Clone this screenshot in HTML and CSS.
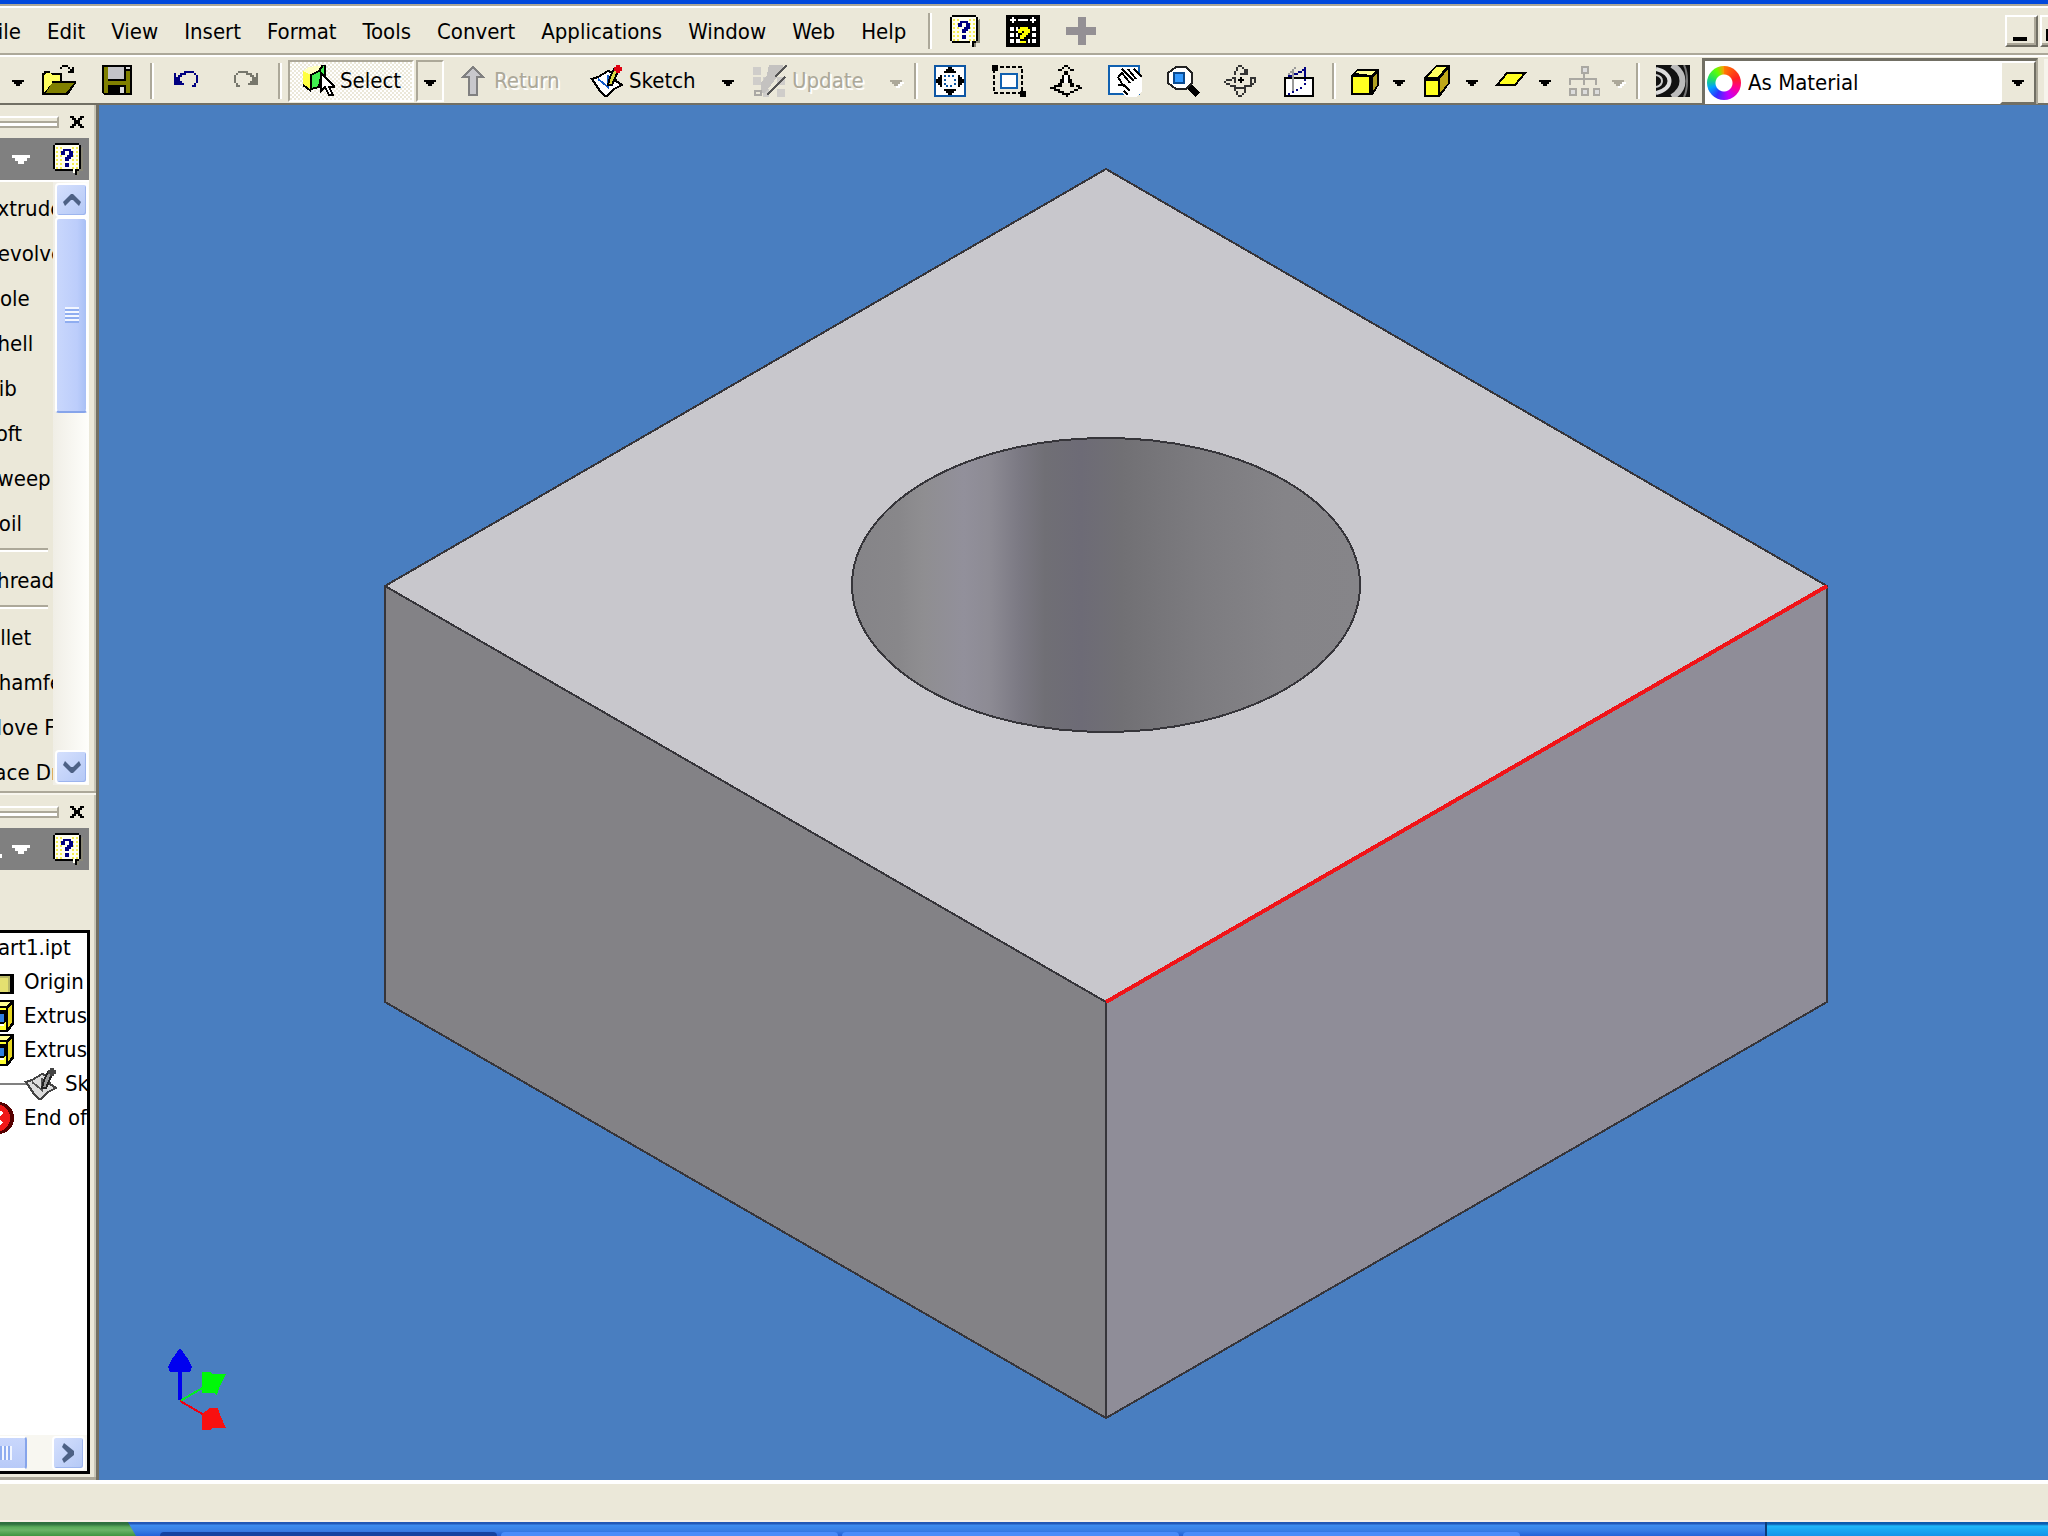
FILE: index.html
```html
<!DOCTYPE html>
<html lang="en">
<head>
<meta charset="utf-8">
<title>Part1.ipt</title>
<link rel="stylesheet" href="styles.css">
</head>
<body>
<svg class="defs" aria-hidden="true">
  <symbol id="help" viewBox="0 0 15 16">
    <path d="M2 14h8l2 2h1v-2h2V2" fill="#8a8878"/>
    <path d="M1 0h12v1h1v12h-1v1h-1v2h-1v-1h-1v-1H1v-1H0V1h1z" fill="#000"/>
    <path d="M1 1h12v12h-2v2h-1v-2H1z" fill="#fffff0"/>
    <path d="M2 2v11M4 2v11M10 2v11M12 2v11" stroke="#f4ec50" stroke-dasharray="1 1" fill="none"/>
    <path d="M4 4h1V3h4v1h1v3H9v1H8v1H6V7h1V6h1V4H6v2H4zM6 10h2v2H6z" fill="#000080"/>
  </symbol>
  <symbol id="down" viewBox="0 0 6 3"><path d="M0 0h6v1H5v1H4v1H2V2H1V1H0z" fill="currentColor"/></symbol>
  <symbol id="extrusion" viewBox="0 0 16 16">
    <path d="M0 3L3 0h13v12l-3 4H0z" fill="#000"/>
    <path d="M1 4h11v11H1z" fill="#ffff30"/><path d="M4 1h10l-2 2H2z" fill="#ffff90"/><path d="M13 4l2-2v9l-2 3z" fill="#e8d820"/>
    <path d="M2 5h10v6l-4 3H2z" fill="#000"/><path d="M6 7h5v4h-2l-2-1z" fill="#2f7fe0"/><path d="M7 12h4v1H7z" fill="#fff"/>
  </symbol>
</svg>

<div class="title-edge"></div>
<header class="menubar">
  <nav class="menus" aria-label="Main menu">
    <button>File</button><button>Edit</button><button>View</button><button>Insert</button><button>Format</button><button>Tools</button><button>Convert</button><button>Applications</button><button>Window</button><button>Web</button><button>Help</button>
  </nav>
  <span class="sep"></span>
  <button class="tool" aria-label="Help topics"><svg class="help-icon"><use href="#help"/></svg></button>
  <button class="tool" aria-label="Show me">
    <svg class="icon" viewBox="0 0 17 16"><path d="M0 0h17v16H0z"/><path d="M3 1h1v3H3zM13 1h1v3h-1zM2 2h3v1H2zM12 2h3v1h-3zM6 2h5v1H6z" fill="#fff"/><path d="M2 6h2v2H2zM2 9h2v2H2zM2 12h2v2H2zM13 6h2v2h-2zM13 9h2v2h-2zM13 12h2v2h-2zM5 6h1v2H5zM5 12h2v2H5zM11 12h1v2h-1zM5 9h1v2H5z" fill="#fff"/><path d="M6 7h1V6h4v1h1v2h-1v1h-1v1H9v1H7v-2h1V9h1V8H8v1H6zM7 13h3v1H7z" fill="#ffff00"/></svg>
  </button>
  <button class="tool" aria-label="Add"><svg class="icon" viewBox="0 0 17 16"><path d="M7 1h4v5h5v4h-5v5H7v-5H1V6h6z" fill="#949094"/></svg></button>
  <div class="window-buttons">
    <button class="winbtn" aria-label="Minimize"><svg viewBox="0 0 13 12"><path d="M3 9h7v2H3z"/></svg></button>
    <button class="winbtn" aria-label="Restore"><svg viewBox="0 0 13 12"><path d="M2 5h7v6H2zM3 7v3h5V7z"/></svg></button>
  </div>
</header>

<div class="toolbar" role="toolbar" aria-label="Standard">
  <button class="drop first" aria-label="New options"><svg><use href="#down"/></svg></button>
  <button class="tool" aria-label="Open"><svg class="icon" viewBox="0 0 17 16"><path d="M0 15V4h1V3h3v1h6v4h7v1l-4 6z" fill="#000"/><path d="M1 14V5l1-1h2l1 1h4v3H5v1L1 14z" fill="#ffff60"/><path d="M2 14l3-5h11l-4 5z" fill="#808000"/><path d="M9 2V1h1V0h3v1h1v1h1V1h1v3h-3V3h1V2h-1V1h-3v1z"/></svg></button>
  <button class="tool" aria-label="Save"><svg class="icon" viewBox="0 0 17 16"><path d="M1 0h15v15H2l-1-1z"/><path d="M2 1h2v7h9V3h2v11h-2v-4H4v4H2z" fill="#808000"/><path d="M4 1h8v6H4z" fill="#c4c4c8"/><path d="M13 1h2v1h-2zM10 11h2v3h-2z" fill="#dcdcdc"/></svg></button>
  <span class="sep"></span>
  <button class="tool" aria-label="Undo"><svg class="icon" viewBox="0 0 17 16"><path d="M2 4h1v2h1V5h1V4h2V3h5v1h1v1h1v4h-1v2h-2v-1h1V9h1V5h-1V4H8v1H6v1H5v2h1v1h1v1H2z" fill="#000080"/></svg></button>
  <button class="tool" aria-label="Redo"><svg class="icon" viewBox="0 0 17 16"><path d="M15 4h-1v2h-1V5h-1V4h-2V3H5v1H4v1H3v4h1v2h2v-1H5V9H4V5h1V4h4v1h2v1h1v2h-1v1h-1v1h5z" fill="#77776c"/></svg></button>
  <span class="sep"></span>
  <button class="labelled pressed"><svg class="icon" viewBox="0 0 17 16"><path d="M1 3l3-2 7-1v3L5 5z" fill="#ffffc0"/><path d="M1 3l4 2v7l-4-2z" fill="#ffff40"/><path d="M5 5l4-2 2-3h1v5l-2 1-1 5-4 1z" fill="#40f050" stroke="#000"/><path d="M1 10l4 3" stroke="#000" fill="none"/><path d="M10 4v9l2-2 2 4h2l-2-4h3z" fill="#fff" stroke="#000"/></svg>Select</button>
  <button class="drop outlined" aria-label="Select options"><svg><use href="#down"/></svg></button>
  <button class="labelled return" disabled><svg class="icon" viewBox="0 0 17 16"><path d="M9 1l5 5h-3v9H7V6H4z" fill="#c8c8cc" stroke="#808080"/></svg>Return</button>
  <button class="labelled sketch"><svg class="icon" viewBox="0 0 17 16"><path d="M1 7l3-1 5-3 3 1 1 4 3 2-4 2-4 4-3-3-2-3z" fill="#fff" stroke="#000"/><path d="M4 7l5 4V5" fill="none" stroke="#1058c8"/><path d="M14 3l-3 7H9l1-4 2-4z" fill="#d8d840" stroke="#000"/><path d="M13 0h2v1h1v2h-1v1h-2V3h-1V1h1z" fill="#e00010"/></svg>Sketch</button>
  <button class="drop" aria-label="Sketch options"><svg><use href="#down"/></svg></button>
  <button class="labelled update" disabled><svg class="icon" viewBox="0 0 17 16"><path d="M0 1h4v4H0zM0 6h4v4H0zM5 6h4v4H5zM12 12h4v4h-4zM5 12h3v4H5zM12 6h4v4h-4z" fill="#cfcdca"/><path d="M8 0h7v2L6 14H4V9l3-4z" fill="#c4c2c0"/><path d="M1 13h3v2H1z" fill="none" stroke="#aaa8a4"/><path d="M17 0l-6 6M16 6L7 15" stroke="#555"/></svg>Update</button>
  <button class="drop" disabled aria-label="Update options"><svg><use href="#down"/></svg></button>
  <span class="sep"></span>
  <button class="tool" aria-label="Zoom all"><svg class="icon" viewBox="0 0 17 16"><path d="M0 0h16v16H0z" fill="#0d56a4"/><path d="M1 1h14v14H1z" fill="#fff"/><path d="M7 1h2v1h1v1h1v1H5V3h1V2h1zM7 15h2v-1h1v-1h1v-1H5v1h1v1h1zM1 7h1V6h1V5h1v6H3v-1H2V9H1zM15 7h-1V6h-1V5h-1v6h1v-1h1V9h1z"/><path d="M5 5h1v1H5zM7 5h1v1H7zM9 5h1v1H9zM5 7h1v1H5zM10 7h1v1h-1zM5 9h1v1H5zM10 9h1v1h-1zM6 10h1v1H6zM8 10h1v1H8z" fill="#0d56a4"/></svg></button>
  <button class="tool" aria-label="Zoom window"><svg class="icon" viewBox="0 0 17 16"><path d="M1 1h14v13H1z" fill="none" stroke="#000" stroke-dasharray="2 1"/><path d="M0 0h3v3H0zM14 13h3v3h-3z"/><path d="M4 4h9v8H4z" fill="#1060b0"/><path d="M5 5h7v6H5z" fill="#fff"/></svg></button>
  <button class="tool" aria-label="Zoom"><svg class="icon" viewBox="0 0 17 16"><path d="M4 2h2V1h1V0h2v1h1v1h2v1h-2V2H9V1H7v1H6v1H4z"/><path d="M7 3h2v2h1v2h1v2h1v2h-2V9H9V7H7v2H6v2H4V9h1V7h1V5h1z"/><path d="M0 11h2v-1h2v1H3v1h2v1h2v1h3v-1h2v-1h2v-1h-1v-1h2v1h1v1h-2v1h-2v1h-2v1H9v1H8v-1H6v-1H4v-1H2v-1H0z"/><path d="M7 5h2v4H7z" fill="#fff"/></svg></button>
  <button class="tool" aria-label="Pan"><svg class="icon" viewBox="0 0 17 16"><path d="M0 0h16v15H0z" fill="#1060b0"/><path d="M1 1h14v13H1z" fill="#fff"/><path d="M7 3l4-1 4 2 2 3v6l-3 3H9l-3-3V9z" fill="#fff"/><path d="M5 6l2-2 4 5M7 2l6 6M10 2l4 5M13 2l4 4M5 6l3 5M5 10h3l3 3M8 13l2 2" fill="none" stroke="#000"/></svg></button>
  <button class="tool" aria-label="Zoom selected"><svg class="icon" viewBox="0 0 17 16"><path d="M5 1h5l3 3v5l-3 3H5L1 9V4z" fill="#fff" stroke="#222"/><path d="M4 4h5v5H4z" fill="#39f" stroke="#0a4a90"/><path d="M12 11l4 4" stroke="#000" stroke-width="3"/></svg></button>
  <button class="tool" aria-label="Rotate"><svg class="icon" viewBox="0 0 17 16"><path d="M5 3h1v2H5zM6 1h1v2H6zM7 0h2v1H7zM9 1h1v1H9zM10 2h1v2h-1zM8 4h4v1H8zM11 2h1v2h-1zM1 7h3v1H1zM0 8h1v1H0zM1 9h2v1H1zM3 10h3v1H3zM5 11h6v1H5zM10 10h4v1h-4zM13 6h1v4h-1zM14 6h2v1h-2zM15 7h1v2h-1zM14 9h1v1h-1zM5 6h1v3H5zM4 6h1v1H4zM5 12h1v1H5zM6 13h1v2H6zM7 15h2v1H7zM9 14h1v1H9zM10 12h1v2h-1z" fill="#333"/><path d="M8 6h1v1h1v1H9v1H8V8H7V7h1z"/></svg></button>
  <button class="tool" aria-label="Look at"><svg class="icon" viewBox="0 0 17 16"><path d="M1 6h15v10H1z"/><path d="M2 7h13v8H2z" fill="#fff"/><path d="M5 2h1v12H5zM3 4h1v2H3zM4 3h1v1H4zM6 1h1v1H6z" fill="#999"/><path d="M6 4h2v1H6zM8 3h2v1H8zM10 2h2v1h-2zM11 1h1v5h-1zM11 7h1v1h-1zM11 9h1v1h-1zM9 11h1v1H9zM7 12h1v1H7zM5 13h1v1H5zM3 14h1v1H3zM3 5h2v1H3z" fill="#000080"/></svg></button>
  <span class="sep"></span>
  <button class="split" aria-label="Shaded display"><svg class="icon" viewBox="0 0 17 16"><path d="M2 5l3-3h11v8l-3 5H2z"/><path d="M3 6h8v8H3z" fill="#ffff20"/><path d="M4 4l1-1h9l-2 2z" fill="#ffff90"/><path d="M13 6l2-2v6l-2 3z" fill="#b0a020"/></svg></button>
  <button class="drop" aria-label="Display options"><svg><use href="#down"/></svg></button>
  <button class="split" aria-label="Orthographic camera"><svg class="icon" viewBox="0 0 17 16"><path d="M2 6l6-6h7v9l-5 7H2z"/><path d="M3 8h6v7H3z" fill="#ffff20"/><path d="M4 6l4-5h5L9 6z" fill="#ffff60"/><path d="M10 7l4-5v7l-4 5z" fill="#c0a818"/></svg></button>
  <button class="drop" aria-label="Camera options"><svg><use href="#down"/></svg></button>
  <button class="split" aria-label="Ground shadow"><svg class="icon" viewBox="0 0 17 16"><path d="M2 10l5-6h9l-5 6z" fill="#ffff20" stroke="#000"/></svg></button>
  <button class="drop" aria-label="Shadow options"><svg><use href="#down"/></svg></button>
  <button class="split" disabled aria-label="Component opacity"><svg class="icon" viewBox="0 0 17 16"><path d="M8 1h3v3H8zM2 12h3v3H2zM8 12h3v3H8zM14 12h3v3h-3z" fill="#ddd" stroke="#aaa8a2"/><path d="M9 4v6M2 10V7h13v3" fill="none" stroke="#aaa8a2"/></svg></button>
  <button class="drop" disabled aria-label="Opacity options"><svg><use href="#down"/></svg></button>
  <span class="sep"></span>
  <button class="tool" aria-label="Zebra analysis"><svg class="icon" viewBox="0 0 17 16"><path d="M0 0h17v16H0z" fill="#111"/><g fill="none" shape-rendering="auto"><path d="M8 0c7 4 7 12 0 16" stroke="#bbb" stroke-width="3"/><path d="M0 2c9 2 9 10 0 12" stroke="#ddd" stroke-width="2"/><path d="M0 5c4 1 4 5 0 6" stroke="#ccc"/><path d="M14 0c2 4 2 12 0 16" stroke="#777"/></g></svg></button>
  <label class="combo">
    <span class="ring"></span>
    <select aria-label="Color"><option>As Material</option></select>
    <span class="combo-arrow"><svg><use href="#down"/></svg></span>
  </label>
  <span class="end-sep"></span>
</div>

<main class="work">
  <aside class="dock">
    <section class="features">
      <div class="grip"><span class="bar"></span><button aria-label="Close features"><svg viewBox="0 0 7 6"><path d="M0 0h2v1h1v1h1V1h1V0h2v1H6v1H5v2h1v1h1v1H5V5H4V4H3v1H2v1H0V5h1V4h1V2H1V1H0z"/></svg></button></div>
      <div class="panel-head"><svg class="white-down"><use href="#down"/></svg><button aria-label="Features help"><svg class="help-icon"><use href="#help"/></svg></button></div>
      <div class="feature-body">
        <div class="feature-list">
          <button>Extrude</button><button>Revolve</button><button>Hole</button><button>Shell</button><button>Rib</button><button>Loft</button><button>Sweep</button><button>Coil</button>
          <hr>
          <button>Thread</button>
          <hr>
          <button>Fillet</button><button>Chamfer</button><button>Move Face</button><button>Face Draft</button>
        </div>
        <div class="vscroll">
          <button class="sbtn" aria-label="Scroll up"><svg viewBox="0 0 9 6"><path d="M4 0h1l4 4-1 2-3-3H4L1 6 0 4z"/></svg></button>
          <div class="thumb"></div>
          <button class="sbtn" aria-label="Scroll down"><svg viewBox="0 0 9 6"><path d="M4 6h1l4-4-1-2-3 3H4L1 0 0 2z"/></svg></button>
        </div>
      </div>
    </section>
    <section class="browser">
      <div class="grip"><span class="bar"></span><button aria-label="Close browser"><svg viewBox="0 0 7 6"><path d="M0 0h2v1h1v1h1V1h1V0h2v1H6v1H5v2h1v1h1v1H5V5H4V4H3v1H2v1H0V5h1V4h1V2H1V1H0z"/></svg></button></div>
      <div class="panel-head"><span class="dot"></span><svg class="white-down"><use href="#down"/></svg><button aria-label="Browser help"><svg class="help-icon"><use href="#help"/></svg></button></div>
      <div class="tree">
        <ul>
          <li class="root">Part1.ipt</li>
          <li><svg class="node" viewBox="0 0 16 16"><path d="M0 5l2-2h5l2 1h7v10H0z" fill="#000"/><path d="M0 4h8v1h6v8H0z" fill="#b8b868"/><path d="M1 5h6l1 1h5v7H1z" fill="#e4e070"/></svg>Origin</li>
          <li><svg class="node"><use href="#extrusion"/></svg>Extrusion1</li>
          <li><svg class="node"><use href="#extrusion"/></svg>Extrusion2</li>
          <li class="child"><svg class="node" viewBox="0 0 17 16"><path d="M1 7l3-1 5-3 3 1 1 4 3 2-4 2-4 4-3-3-2-3z" fill="#ddd" stroke="#444"/><path d="M4 7l5 4V5" fill="none" stroke="#555"/><path d="M14 3l-3 7H9l1-4 2-4z" fill="#999" stroke="#222"/><path d="M13 0h2v1h1v2h-1v1h-2V3h-1V1h1z" fill="#444"/></svg>Sketch2</li>
          <li><svg class="node" viewBox="0 0 16 16"><circle cx="8" cy="8" r="8" fill="#500"/><circle cx="7" cy="8" r="7" fill="#f01818"/><path d="M4 5l6 6M10 5l-6 6" stroke="#fff" stroke-width="2"/></svg>End of Part</li>
        </ul>
        <div class="hscroll">
          <div class="hthumb"></div>
          <button class="sbtn" aria-label="Scroll right"><svg class="right" viewBox="0 0 9 10"><path d="M2 0l5 4v2l-5 4-1-2 3-3-3-3z"/></svg></button>
        </div>
      </div>
    </section>
  </aside>
  <svg class="viewport" viewBox="99 105 1949 1375" preserveAspectRatio="xMidYMid meet" role="img" aria-label="Block with hole">
    <defs>
      <linearGradient id="bore">
        <stop offset="0" stop-color="#858488"/><stop offset=".09" stop-color="#88878a"/><stop offset=".14" stop-color="#8f8e91"/><stop offset=".22" stop-color="#92909b"/><stop offset=".27" stop-color="#8d8b94"/><stop offset=".33" stop-color="#7b7983"/><stop offset=".38" stop-color="#706f75"/><stop offset=".45" stop-color="#6d6b76"/><stop offset=".53" stop-color="#717074"/><stop offset=".68" stop-color="#7c7b7f"/><stop offset=".85" stop-color="#858488"/><stop offset="1" stop-color="#868589"/>
      </linearGradient>
    </defs>
    <g stroke="#36353a" stroke-width="2" stroke-linejoin="round" shape-rendering="crispEdges">
      <path d="M1106 169L1827 586L1106 1002L385 586z" fill="#c8c7cc"/>
      <path d="M385 586L1106 1002V1418L385 1002z" fill="#838286"/>
      <path d="M1827 586L1106 1002V1418L1827 1002z" fill="#8f8d98"/>
      <ellipse cx="1106" cy="585" rx="254" ry="147" fill="url(#bore)"/>
      <path d="M1106 1002L1827 586" stroke="#f01418" stroke-width="4"/>
    </g>
    <g shape-rendering="crispEdges">
      <path d="M180 1400V1370" stroke="#0000f0" stroke-width="4"/>
      <path d="M180 1348l8 11 4 8-2 5h-20l-2-5 4-8z" fill="#0000f0"/>
      <path d="M180 1401l26-15" stroke="#00f020" stroke-width="2"/>
      <path d="M202 1372h8l2 2h14l-6 12-3 9-3-2h-12z" fill="#00f808"/>
      <path d="M180 1401l26 15" stroke="#f00010" stroke-width="2"/>
      <path d="M202 1414l8-6h8l3 9 5 11h-14l-2 2h-8z" fill="#f81010"/>
    </g>
  </svg>
</main>
<footer class="status"></footer>
<div class="taskbar">
  <button class="start" aria-label="Start"></button>
  <div class="tasks"><button class="active" aria-label="Window 1"></button><button aria-label="Window 2"></button><button aria-label="Window 3"></button><button aria-label="Window 4"></button></div>
  <div class="tray"></div>
</div>
</body>
</html>
```
FILE: styles.css
```css
* { box-sizing: border-box; }
body {
  margin: 0;
  height: 100vh;
  display: flex;
  flex-direction: column;
  overflow: hidden;
  background: #ebe8d9;
  color: #000;
  font: 22px/28px "DejaVu Sans Condensed", "DejaVu Sans", sans-serif;
  font-stretch: condensed;
}
button, select {
  font: inherit;
  color: inherit;
  border: 0;
  padding: 0;
  background: none;
  white-space: nowrap;
}
svg { display: block; flex: none; shape-rendering: crispEdges; }
.defs { position: absolute; width: 0; height: 0; }

.title-edge { flex: none; height: 8px; background: #0048dc; border-bottom: 2px solid #fff; box-shadow: inset 0 -2px #aca899; }

/* menu bar */
.menubar { flex: none; display: flex; align-items: center; height: 47px; border-bottom: 2px solid #aca899; }
.menus { display: flex; margin: 0 5px 0 -25px; }
.menus button { padding: 2px 13px 0; }
.sep { flex: none; width: 12px; height: 36px; display: flex; justify-content: center; }
.sep::before { content: ""; width: 4px; background: linear-gradient(90deg, #aca899 50%, #fff 50%); }
.tool { flex: none; width: 58px; display: flex; justify-content: center; }
.icon { width: 34px; height: 32px; }
.help-icon { width: 30px; height: 32px; }
.window-buttons { display: flex; gap: 2px; width: 43px; margin-left: auto; overflow: hidden; }
.winbtn { flex: none; width: 33px; height: 32px; border: 2px solid; border-color: #fff #716f64 #716f64 #fff; box-shadow: inset -2px -2px #aca899; }
.winbtn svg { width: 26px; height: 24px; }

/* toolbar */
.toolbar { flex: none; display: flex; align-items: center; height: 50px; padding-top: 2px; border-top: 2px solid #fff; border-bottom: 2px solid #716f64; }
.drop { flex: none; width: 28px; height: 42px; display: flex; align-items: center; justify-content: center; padding-top: 3px; }
.drop svg, .combo-arrow svg { width: 12px; height: 6px; }
.drop.first { width: 30px; padding-left: 6px; }
.drop:disabled { color: #aca899; }
.drop:disabled svg { filter: drop-shadow(2px 2px #fff); }
.outlined { margin-left: 2px; border: 2px solid; border-color: #aca899 #fff #fff #aca899; }
.labelled { flex: none; height: 42px; display: flex; align-items: center; gap: 5px; padding-left: 11px; line-height: 32px; }
.labelled:disabled { color: #aca899; text-shadow: 2px 2px #fff; }
.pressed {
  width: 126px;
  margin-left: 2px;
  border: 2px solid;
  border-color: #aca899 #fff #fff #aca899;
  background: repeating-conic-gradient(#fff 0 25%, #ebe8d9 0 50%) 0 0 / 4px 4px;
}
.return { width: 135px; }
.sketch { width: 135px; }
.update { width: 140px; }
.split { flex: none; width: 45px; display: flex; justify-content: center; padding-left: 2px; }
.combo { flex: 1; min-width: 180px; height: 46px; display: flex; align-items: center; background: #fff; border: 3px solid #716f64; border-bottom: 0; border-right: 2px solid #aca899; }
.ring { flex: none; width: 34px; height: 34px; margin-left: 2px; border-radius: 50%; background: radial-gradient(#fff 8px, transparent 9px), conic-gradient(#ff7a00, #ff2020 70deg, #ff0090 110deg, #c000ff 160deg, #3030ff 210deg, #00a0ff 250deg, #20e060 290deg, #60ff00 330deg, #ff9a00); }
.combo select { flex: 1; min-width: 0; height: 36px; margin-left: 7px; appearance: none; outline: 0; }
.combo-arrow { width: 36px; height: 100%; display: flex; align-items: center; justify-content: center; background: #ebe8d9; border: 2px solid; border-color: #fff #716f64 #716f64 #fff; }
.end-sep { flex: none; width: 10px; height: 44px; border-right: 4px solid #f6f4ec; }

/* work area */
.work { flex: 1; min-height: 0; display: flex; }
.dock { flex: none; width: 99px; display: flex; flex-direction: column; overflow: hidden; border-right: 3px solid #716f64; box-shadow: inset -2px 0 #c8c5b6; }
.viewport { flex: 1; min-width: 0; width: 100%; height: 100%; background: #497ec0; }
.features { flex: none; border-bottom: 2px solid #aca899; }
.grip { display: flex; align-items: center; height: 33px; }
.bar { width: 59px; height: 12px; border: 2px solid; border-color: #fff #aca899 #aca899 #fff; border-left: 0; background: linear-gradient(#ebe8d9 3px, #aca899 3px 5px, #fff 5px); }
.grip button { margin-left: 11px; }
.grip svg { width: 14px; height: 12px; }
.panel-head { display: flex; align-items: center; width: 89px; height: 42px; background: #808080; }
.white-down { width: 18px; height: 9px; margin-left: 12px; color: #fff; }
.panel-head button { margin-left: auto; margin-right: 6px; }
.dot { width: 2px; height: 4px; margin-top: 14px; background: #fff; margin-right: -2px; }
.feature-body { display: flex; width: 89px; height: 611px; padding-bottom: 6px; border-top: 2px solid #fff; }
.feature-list { width: 53px; overflow: hidden; padding-top: 4px; }
.feature-list button { display: block; height: 45px; margin-left: -15px; }
.feature-list hr { height: 4px; margin: 2px 5px 6px 0; border: 0; background: linear-gradient(#aca899 50%, #fff 50%); }
.vscroll { width: 36px; display: flex; flex-direction: column; background: linear-gradient(90deg, #f0eee6, #fefefb); padding: 1px 1px 1px 2px; }
.sbtn { flex: none; width: 33px; height: 34px; display: flex; align-items: center; justify-content: center; border: 2px solid #fff; border-radius: 4px; background: linear-gradient(135deg, #d5e0fd, #b4c8f6); box-shadow: inset -1px -1px #9db5ee; }
.sbtn svg { width: 18px; height: 12px; fill: #4d6185; shape-rendering: auto; }
.sbtn .right { height: 20px; }
.thumb { height: 196px; margin: 0 0 auto; display: flex; border: 2px solid #fff; border-bottom-color: #86a4ea; border-radius: 4px; background: linear-gradient(90deg, #c9d7fc, #bccdfb 70%, #a9c0f5); }
.thumb::before { content: ""; width: 14px; height: 16px; margin: auto; background: repeating-linear-gradient(#f2f6ff 0 2px, #8fadf0 2px 4px); }
.browser { flex: 1; min-height: 0; display: flex; flex-direction: column; border-top: 2px solid #f8f6ee; border-bottom: 3px solid #aca899; }
.tree { flex: 1; min-height: 0; width: 90px; margin: 60px 0 3px; display: flex; flex-direction: column; background: #fff; border: 3px solid #000; border-left: 0; overflow: hidden; }
.tree ul { flex: 1; margin: 0; padding: 0; list-style: none; }
.tree li { display: flex; align-items: center; height: 34px; padding-bottom: 4px; white-space: nowrap; gap: 10px; margin-left: -18px; }
.tree .root { margin-left: -13px; }
.tree .child { margin-left: 0; gap: 7px; }
.tree .child::before { content: ""; flex: none; width: 30px; height: 2px; margin-right: -13px; background: #808080; }
.node { width: 32px; height: 32px; }
.tree .child .node { width: 34px; }
.hscroll { display: flex; height: 36px; padding: 1px 2px 1px 0; background: #f8f7f1; }
.hthumb { width: 27px; margin-right: auto; display: flex; border: 2px solid #fff; border-left: 0; border-right-color: #86a4ea; border-radius: 0 4px 4px 0; background: linear-gradient(#c9d7fc, #b8caf8); }
.hthumb::before { content: ""; width: 12px; height: 14px; margin: auto auto auto 0; background: repeating-linear-gradient(90deg, #8fadf0 0 2px, #f2f6ff 2px 4px); }

.status { flex: none; height: 42px; border-top: 4px solid #fff; border-bottom: 2px solid #f6efe6; }

/* taskbar */
.taskbar { flex: none; height: 14px; display: flex; background: linear-gradient(#2458b8 2px, #3f8cf0 3px, #3a80e6 8px, #2462d8 14px); }
.start { width: 136px; background: linear-gradient(#2f7040 2px, #5aaa5c 5px, #6ab468 8px, #3f9440); clip-path: polygon(0 0, 94% 0, 100% 100%, 0 100%); }
.tasks { flex: 1; display: flex; gap: 4px; padding: 10px 0 0 24px; }
.tasks button { width: 337px; background: #4a8cfa; border-radius: 4px 4px 0 0; }
.tasks .active { background: #1543a0; }
.tray { width: 283px; border-left: 2px solid #0a3c78; background: linear-gradient(#0c5cb0 2px, #20b8fa 4px, #18a4f0 9px, #1494ea); }
```
